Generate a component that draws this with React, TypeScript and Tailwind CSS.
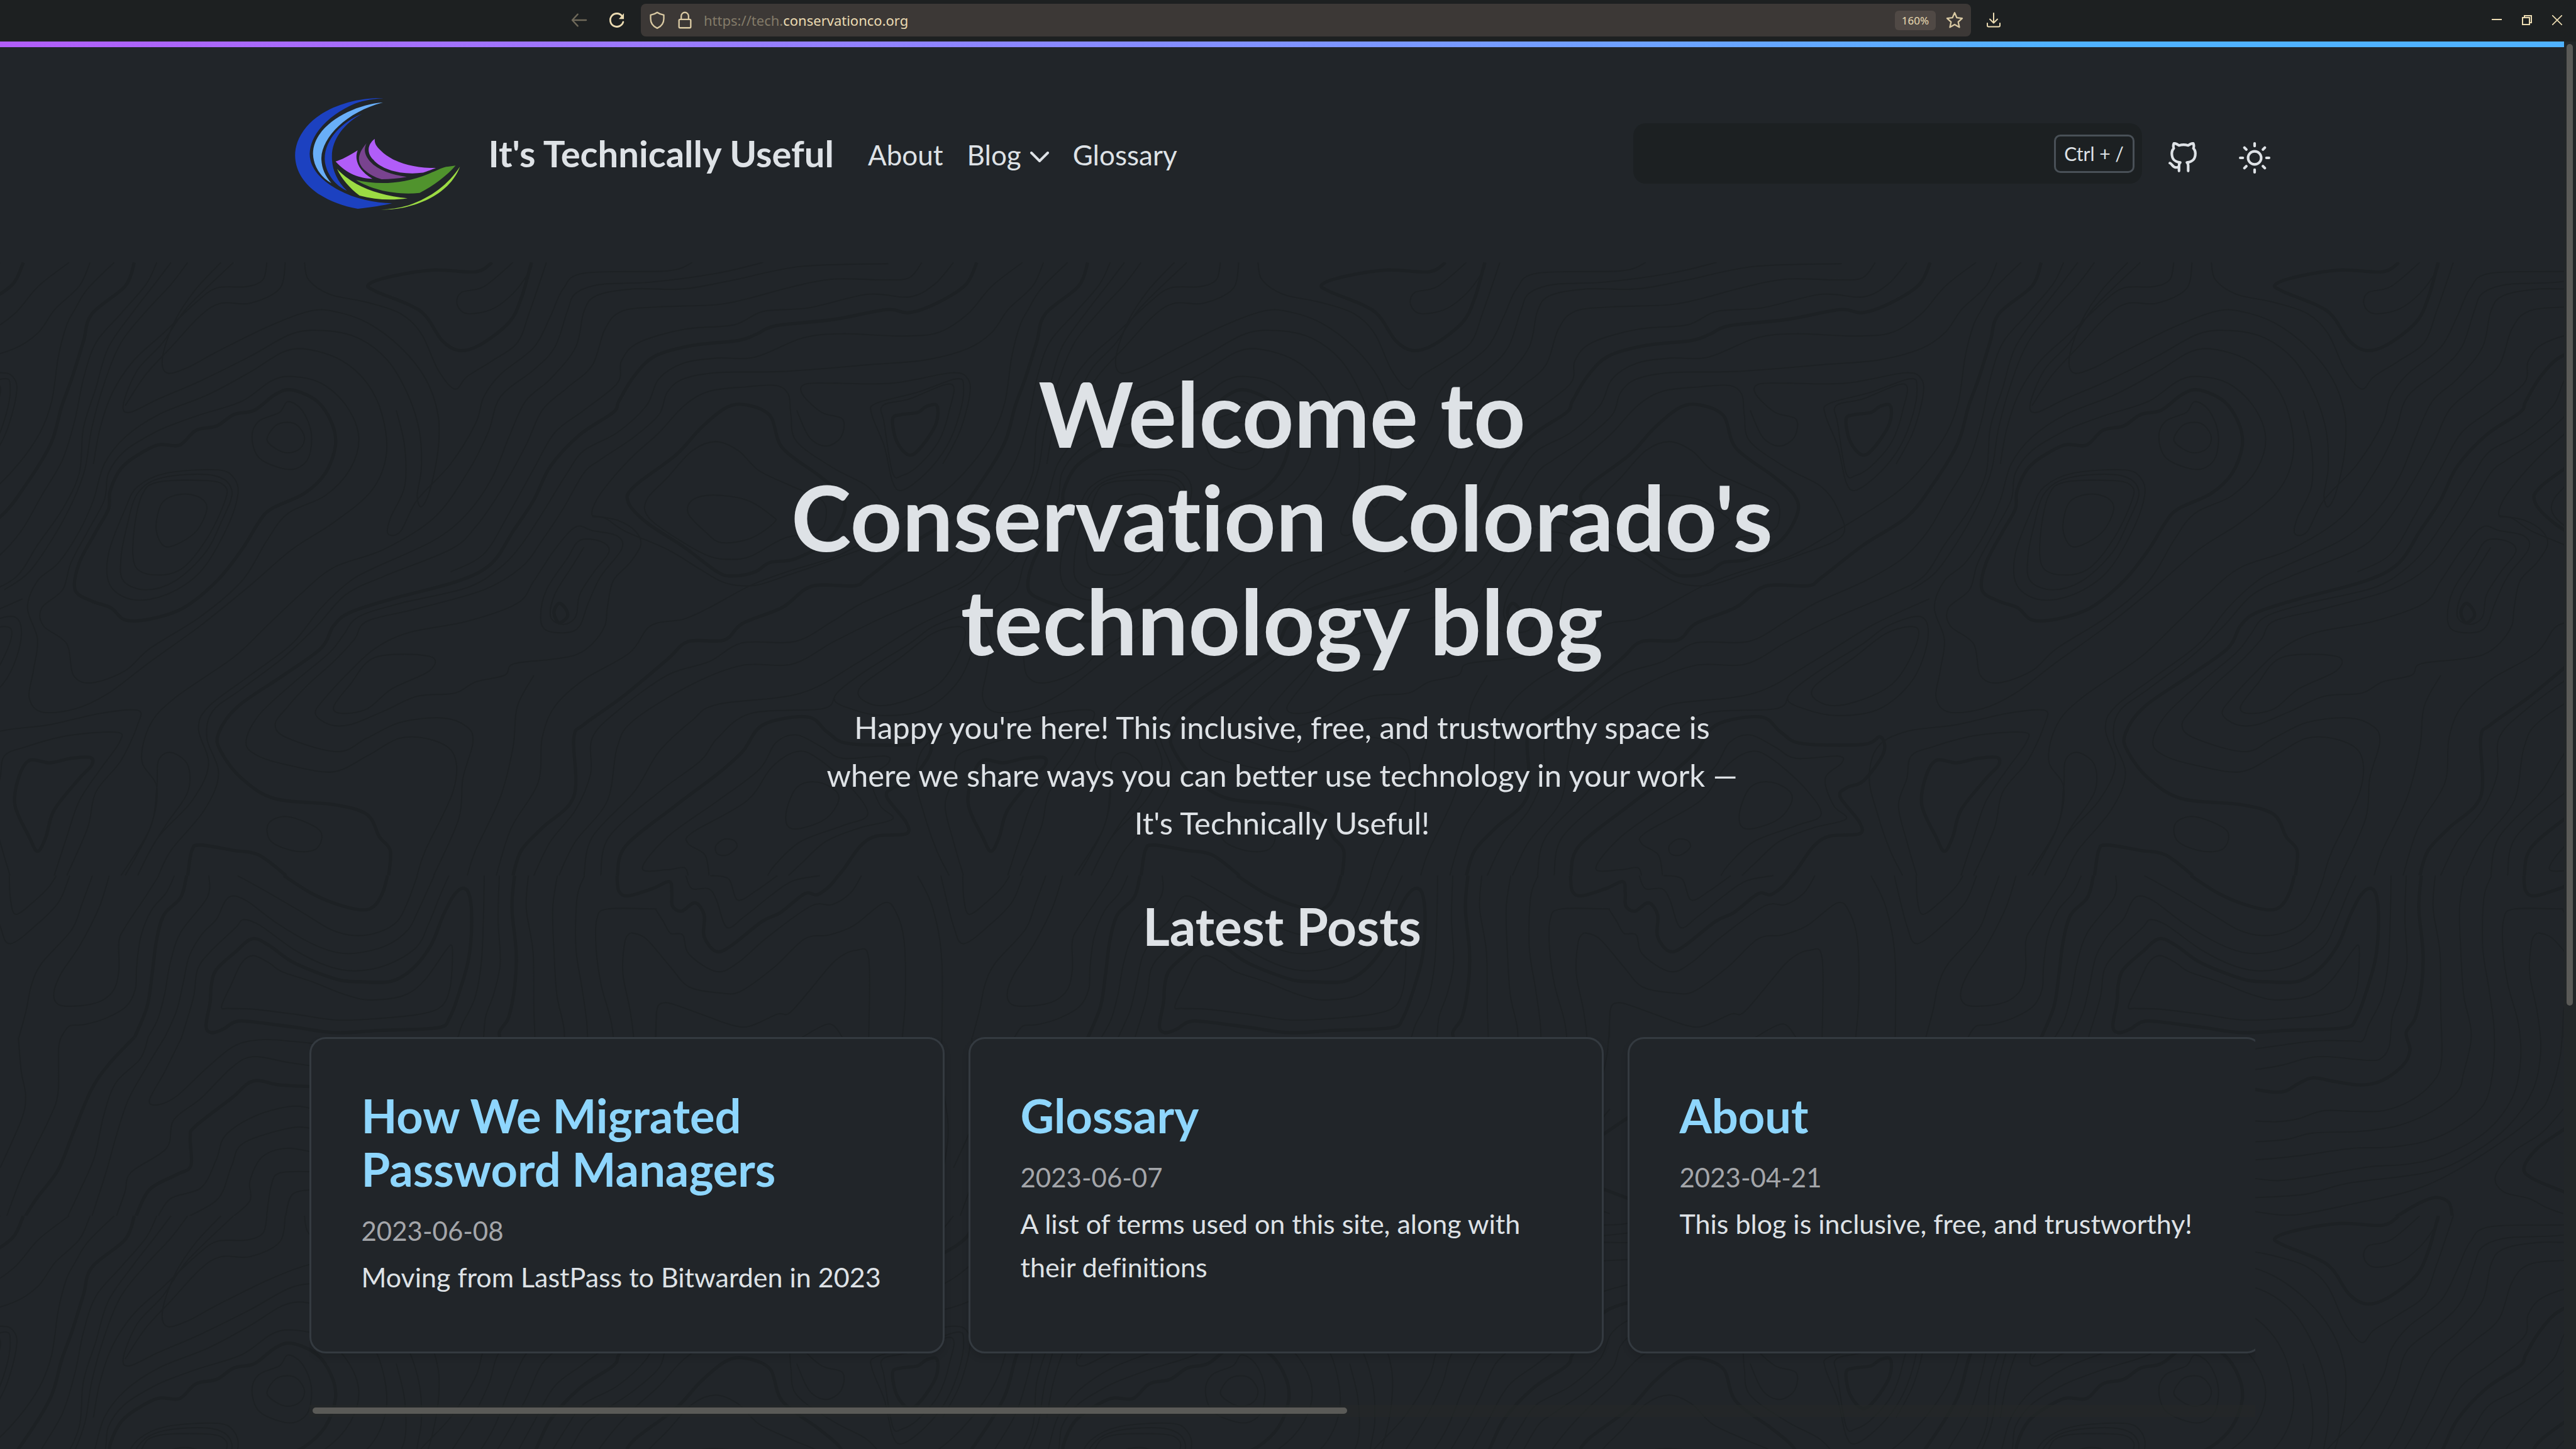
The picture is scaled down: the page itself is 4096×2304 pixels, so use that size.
import type { ReactNode } from "react";

/* ---------- Contour-line background ---------- */

const TILE = 1895;

type Frame = { sx: number; sy: number; dy: number };
const upper: Frame = { sx: 0.60308, sy: 1.12, dy: -81 };
const lower: Frame = { sx: 0.82526, sy: 2.3059, dy: 1219 };
const lowerWide: Frame = { sx: 1.19695, sy: 2.3059, dy: 1219 };

/* Catmull-Rom spline through the listed points, as an SVG path. */
function curve(frame: Frame, points: string): string {
  const p = points.split(" ").map((pair) => {
    const [x, y] = pair.split(",").map(Number);
    return [x / frame.sx, y / frame.sy + frame.dy];
  });
  const closed = p[0][0] === p[p.length - 1][0] && p[0][1] === p[p.length - 1][1];
  const n = p.length;
  let d = `M${p[0][0].toFixed(1)} ${p[0][1].toFixed(1)}`;
  for (let i = 0; i < n - 1; i++) {
    const a = i > 0 ? p[i - 1] : closed ? p[n - 2] : p[0];
    const b = p[i];
    const c = p[i + 1];
    const e = i < n - 2 ? p[i + 2] : closed ? p[1] : p[n - 1];
    const c1 = [b[0] + (c[0] - a[0]) / 6, b[1] + (c[1] - a[1]) / 6];
    const c2 = [c[0] - (e[0] - b[0]) / 6, c[1] - (e[1] - b[1]) / 6];
    d += `C${[...c1, ...c2, ...c].map((v) => v.toFixed(1)).join(" ")}`;
  }
  return d;
}

const thinUpper = [
  "83,91 46,144 17,206 -18,247 -63,255 -131,250 -180,259 -238,302 -283,304 -323,315 -353,350 -368,410 -403,470 -443,510 -463,560 -493,650 -518,720 -543,770 -583,815 -663,850 -713,880 -731,920 -748,960 -793,1030 -833,1100 -848,1160 -833,1190 -793,1212 -743,1225 -703,1190 -663,1150 -623,1155 -598,1190 -600,1270 -633,1400 -643,1456",
  "108,91 95,144 66,195 46,247 17,283 -33,308 -102,319 -205,334 -281,336 -323,350 -343,380 -353,430 -383,480 -423,530 -443,560 -468,640 -493,710 -518,770 -563,820 -643,862 -703,890 -718,930 -743,980 -773,1030 -798,1080 -813,1120 -798,1150 -738,1180 -703,1150 -663,1115 -613,1105 -583,1125 -576,1160 -588,1240 -593,1330 -623,1456",
  "137,91 105,150 90,195 80,230 70,300 62,400 48,470 22,540 -10,600 -50,650 -95,700 -140,745 -200,780 -243,810 -293,860 -323,885 -363,900 -388,960 -443,1020 -478,1080 -493,1150 -498,1250 -530,1350 -548,1456",
  "858,490 830,510 800,570 775,620 778,660 815,710 850,745 875,752 900,745 940,705 980,690 990,660 985,620 950,590 910,555 885,510 858,490",
  "855,609 830,620 825,650 845,690 865,715 900,705 928,670 925,655 895,620 855,609",
  "1065,700 1010,745 940,790 905,810 870,805 840,775 800,730 750,690 725,660 710,655 715,620 735,570 760,520 790,470 820,410 850,378 895,368 930,365 945,385 948,430 955,490 1000,550 1040,590 1060,640 1065,700",
  "710,655 740,665 762,690 768,720 755,760 735,800 728,860 725,900 710,940 690,965 660,975 615,985 605,1010 570,1025 545,1050 500,1057 460,1090 420,1120 395,1120 378,1095 390,1060 420,1000 450,950 490,915 560,890 620,850 640,800 665,730 690,680 710,688 740,700 745,730 720,790 705,850 695,900 680,915 655,910 648,880 655,820 680,750 695,710 720,712 730,735 712,780 695,830 690,880 675,897 660,880 665,830 685,770 700,725",
  "450,970 515,968 515,1000 470,1040 440,1085 410,1095 400,1080 420,1030 450,970",
  "1140,362 1090,395 1058,410 1060,450 1070,560 1082,565 1100,545 1125,490 1138,420 1140,362",
  "1147,350 1100,380 1050,405 1045,430 1060,500 1070,580 1082,598 1110,560 1135,500 1150,430 1155,370 1147,350",
  "1130,540 1150,470 1162,390 1160,350 1140,337 1070,360 1000,360 965,362 962,385 985,425 1010,440 1008,480 990,500 970,480 955,420",
  "345,447 330,455 320,485 330,505 345,515 360,505 365,480 357,455 345,447",
  "345,401 335,425 310,445 302,480 310,525 335,548 355,550 370,525 373,470 362,420 345,401",
  "350,345 325,355 290,400 240,430 210,450 185,470 150,510 130,560 125,620 105,690 85,760 75,820 50,860 52,900 80,940 88,1010 110,1027 150,1000 180,950 240,880 290,800 320,710 345,650 390,610 420,550 430,480 415,410 385,360 350,345",
  "265,91 235,150 210,220 195,300 200,337 225,325 260,290 320,235 370,200 400,200 440,225 480,280 510,350 525,430 525,510 515,600 505,635 500,610 505,550 503,470 490,390 465,310 430,260 390,243 350,250 300,300 240,355 190,395 155,425 148,405 165,330 195,270 225,190 280,91",
  "370,285 340,290 300,335 250,385 190,430 150,480 125,540 112,620 95,690 70,760 45,800 33,860 45,930 40,1000 35,1060 50,1092 90,1085 130,1050 180,980 240,900 300,810 350,730 400,670 445,600 463,520 458,430 440,360 410,310 370,285",
  "260,553 200,560 165,590 150,640 130,740 132,810 160,842 200,830 240,780 270,690 285,610 280,570 260,553",
  "255,565 195,570 165,605 152,680 145,750 148,800 175,820 210,800 245,740 265,670 278,600 255,565",
  "250,577 190,580 170,610 160,700 163,770 190,787 220,770 250,700 270,620 270,590 250,577",
  "218,607 195,625 187,680 195,720 210,720 235,690 248,640 240,615 218,607",
  "615,91 580,145 553,158 548,185 560,205 590,195 615,160 635,110 638,91",
  "365,91 370,130 395,162 440,180 480,205 505,250 525,330 545,373 560,345 590,310 620,270 635,200 655,91",
  "830,91 800,110 700,115 675,150 660,210 640,280 600,340 580,390 570,450 540,540 500,620 480,690 465,695 468,660 485,590 485,500 475,420",
  "915,91 860,115 780,135 720,140 690,160 680,200 665,280 640,330 600,390 585,470 560,560 520,660 460,730 400,770 360,830 320,900 280,970 210,1060 180,1120 170,1200 188,1260 180,1350 150,1456",
  "1065,94 960,100 880,130 820,150 760,150 715,165 700,200 690,280 660,350 630,400 610,480 590,570 560,650 520,710 450,770 420,800 385,860 350,940 300,1010 250,1080 238,1130 250,1210 230,1290 190,1370 165,1456",
  "1105,91 1090,125 1060,130 1000,128 950,145 900,170 860,185 790,190 745,200 725,240 710,320 680,370 650,420 630,500 600,600 570,680 540,730 460,790 415,830 380,900 340,970 290,1040 255,1090 248,1150 262,1230 245,1310 205,1400 190,1456",
  "1143,91 1120,140 1090,168 1040,162 970,192 915,200 880,230 820,240 765,270 745,310 740,360 700,420 665,470 640,550 610,650 580,740 540,780",
  "188,91 175,140 145,205 115,270 100,350 90,440 75,530 50,610 25,690 -5,750 -50,800 -110,850 -145,890 -190,935 -253,938 -293,980 -343,1010 -403,1090 -433,1150 -435,1230 -453,1310 -483,1380 -503,1456",
  "205,91 185,140 160,200 130,280 115,370 100,460 95,560 75,640 45,720 20,790 -20,830 -83,880 -143,935 -193,985 -253,988 -313,1030 -383,1110 -403,1170 -415,1290 -453,1380 -473,1456",
  "225,91 205,140 175,200 145,270 125,360 110,460 102,550 88,620 65,700 35,780 5,820",
  "320,91 315,130 295,145 260,148 235,180 195,250 160,310 135,380 120,460 112,540",
  "342,91 335,150 300,182 265,182 240,210 205,280 175,340 150,410",
  "1170,840 1100,900 1030,980 960,1050 860,1075 830,1110 790,1180 760,1270 710,1370 700,1456",
  "1000,1060 985,1085 900,1095 860,1150 840,1200 790,1270 730,1370 720,1456",
  "640,1010 620,1080 615,1170 600,1280 570,1400 560,1456",
  "1160,880 1120,900 1090,940 1030,1010 1000,1060 1020,1085 1060,1100 1110,1085 1150,1020 1168,930 1160,880",
  "1155,905 1120,915 1080,970 1030,1040 1045,1075 1080,1070 1125,1030 1150,960 1155,905",
  "80,1456 105,1350 115,1270 145,1200 165,1120 165,1088 120,1095 60,1120 0,1135 -35,1170 -45,1240 -35,1320 -20,1400 -5,1456",
  "65,1456 80,1370 95,1290 120,1220 143,1160 140,1137 80,1145 30,1170 5,1190 0,1240 -10,1300 0,1380 12,1456",
  "145,1456 180,1350 188,1260 190,1200 205,1182 225,1210 225,1270 200,1340 180,1400 165,1456",
  "345,1325 322,1340 325,1380 355,1402 380,1395 383,1355 345,1325",
  "825,1456 820,1438 800,1443 770,1440 800,1370 860,1290 910,1220 930,1160 955,1143 985,1170 1010,1195 1060,1190 1065,1205 1045,1240 1055,1300 1070,1330 1030,1350 990,1380 960,1430 945,1456",
  "850,1456 845,1410 825,1385 830,1360 895,1290 925,1215 955,1180 980,1195 1020,1260 1040,1320 1010,1345 960,1380 930,1430 920,1456",
  "980,1248 955,1260 942,1320 950,1352 985,1335 1003,1300 1003,1270 980,1248",
  "868,1375 858,1390 860,1408 872,1410 883,1393 880,1378 868,1375",
];

const thickUpper = [
  "28,91 15,140 -18,180 -53,203 -80,196 -143,218 -213,232 -235,250 -258,265 -313,276 -358,300 -383,345 -401,400 -408,425 -448,475 -483,545 -503,620 -528,690 -553,760 -593,800 -673,840 -723,870 -743,900 -758,950 -803,1010 -858,1080 -881,1140 -878,1180 -853,1240 -813,1285 -743,1298 -703,1320 -688,1370 -675,1400 -677,1456",
  "161,91 150,144 110,206 100,267 86,350 74,411 61,494 31,586 0,658 -52,720 -102,792 -119,811 -170,812 -205,859 -253,895 -275,932 -318,935 -343,975 -398,1060 -443,1120 -455,1150 -455,1280 -493,1350 -518,1400 -528,1456",
  "350,375 330,385 305,420 280,430 260,455 235,465 215,498 190,497 165,520 145,550 132,600 130,640 115,690 95,760 90,820 110,845 133,860 150,887 180,885 220,860 260,800 290,730 310,670 325,640 365,605 390,560 402,500 398,450 380,400 350,375",
  "894,408 870,415 840,460 810,520 760,590 753,625 775,670 820,725 860,780 879,789 905,780 923,759 953,751 992,710 1012,648 1007,607 982,566 938,504 923,432 894,408",
  "670,850 664,870 670,893 680,880 678,862 670,850",
  "1080,430 1070,440 1075,490 1090,520 1105,500 1122,450 1123,410 1110,412 1100,425 1080,430",
  "590,91 570,112 520,108 470,122 442,140 450,155 490,185 510,210 530,265 550,287 575,275 610,225 625,170 637,91",
  "343,1456 310,1410 280,1400 240,1388 230,1400 225,1456",
  "108,1193 85,1195 60,1205 35,1200 22,1240 18,1300 35,1370 45,1402 55,1370 65,1310 95,1240 110,1210 108,1193",
  "740,1456 750,1390 810,1300 860,1230 890,1180 915,1120 968,1103 992,1137 1017,1162 1091,1164 1111,1147 1115,1183 1091,1245 1071,1260 1063,1281 1086,1337 1086,1363 1051,1368 1032,1389 1012,1440 1005,1456",
];

const thinLower = [
  "30,742 35,900 42,1010 35,1120 0,1340",
  "100,742 96,800 95,1000 80,1120 40,1350 10,1568",
  "243,742 230,840 190,950 170,1100 155,1290 130,1450 110,1568",
  "270,742 240,880 210,1030 190,1200 175,1350 150,1568",
  "298,742 270,900 245,1030 260,1050 290,1010 340,880 385,780 430,752 480,760 520,772",
  "520,876 470,855 415,830 380,880 330,1020 285,1120 273,1250 215,1360 205,1450 190,1568",
  "520,1074 480,1057 420,1100 370,1190 355,1300 330,1430 280,1480 258,1568",
  "520,1164 480,1155 400,1225 380,1330 358,1480 305,1568",
  "520,1272 470,1250 430,1290 410,1400 410,1490 380,1568",
  "520,1358 460,1362 445,1420 437,1568",
  "520,1438 480,1460 468,1568",
  "1075,153 1088,210 1100,265 1120,272 1130,360 1175,440 1210,400 1260,280 1330,140 1365,133 1395,80 1413,0",
  "1076,742 1078,610 1090,583 1110,595 1150,635 1200,685 1230,690 1275,635 1295,630 1330,520 1370,390 1405,342 1425,380 1425,742",
  "1035,262 1060,290 1100,420 1130,510 1180,538 1215,530 1270,420 1320,290 1360,272 1400,230 1450,125 1470,170 1483,300 1485,560 1480,742",
  "1125,0 1135,60 1162,60 1175,110 1192,237 1220,190 1265,90 1300,25 1345,0",
  "1165,0 1195,15 1210,112 1240,70 1275,0",
  "1315,742 1360,680 1382,742",
  "1505,0 1530,150 1545,400 1545,900 1555,1200 1530,1568",
];

const thickLower = [
  "220,742 180,860 150,980 120,1180 95,1350 60,1480 40,1568",
  "520,968 460,960 415,942 380,1020 320,1150 312,1200 313,1330 290,1370 245,1440 222,1568",
  "1012,0 1015,70 1030,93 1070,60 1098,28 1102,80 1103,140 1118,163 1140,125 1155,180 1155,280 1175,348 1200,320 1250,210 1280,170 1320,83 1340,88 1360,50 1375,0",
];

const thinLowerWide = [
  "22,0 25,110 38,178 80,120 115,55 134,0",
  "-30,0 0,230 25,312 90,220 140,120 166,0",
  "220,0 195,130 170,250 100,400 75,500 62,620 45,742",
  "260,0 235,150 190,320 145,450 128,540 140,592 190,597 240,575 272,520 283,430 283,300 300,230 345,100 378,0",
  "415,0 395,80 360,160 335,280 325,420 322,520 300,600 250,655 200,683 165,690 145,742",
  "497,0 493,100 430,260 405,400 392,540 375,660 352,742",
  "392,742 420,620 435,500 450,370 480,270 515,200 535,120 555,93 590,120 660,220 740,310 800,352 850,355 920,320 970,250 995,160 1033,0",
  "432,742 460,560 470,430 500,350 560,240 580,202 620,230 700,340 780,415 845,437 920,410 990,330 1020,220 1045,100 1068,0",
  "565,0 640,80 720,170 790,250 845,275 900,260 945,210 970,120 993,0",
  "602,367 575,400 550,500 527,600 545,609 600,612 700,635 800,662 900,655 1000,635 1050,600 1070,520 1076,400 1075,322 1060,345 1010,480 960,550 880,570 820,545 740,485 670,440 640,400 602,367",
  "1152,0 1150,200 1145,400 1130,560 1100,680 1085,755 1060,758 980,757 900,775 820,797",
  "1188,0 1185,200 1190,400 1175,540 1155,650 1148,780 1130,835 1100,847 1000,830 950,838 890,870 820,892",
  "1257,0 1252,150 1268,350 1270,600 1272,850 1250,950 1200,1030 1135,1077 1060,1080 990,1078 930,1115 880,1128 820,1124",
  "1326,0 1315,150 1318,350 1325,550 1343,730 1325,900 1310,990 1250,1080 1170,1145 1080,1172 967,1180 900,1210 820,1221",
  "1391,0 1373,100 1370,330 1385,520 1397,700 1395,880 1375,1040 1320,1140 1240,1215 1150,1245 1060,1250 930,1285 820,1305",
  "1562,153 1445,153 1420,200 1418,330 1430,500 1455,680 1460,850 1440,1020 1380,1170 1280,1280 1190,1323 1100,1335 960,1380 880,1398 820,1386",
  "1500,262 1487,300 1482,450 1500,630 1508,800 1490,980 1430,1150 1340,1280 1240,1360 1050,1410 950,1460 820,1477",
  "1562,620 1555,820 1530,1000 1500,1090 1400,1240 1280,1380 1190,1450 1060,1505 960,1545 900,1557 820,1538",
  "1562,1070 1510,1180 1440,1270 1400,1380 1420,1450 1480,1480 1520,1520 1562,1550",
];

const thickLowerWide = [
  "444,0 430,100 390,180 372,300 362,450 350,600 320,742",
  "675,0 740,80 800,130 860,157 890,140 910,80 922,0",
  "600,290 560,350 515,430 503,500 500,580 490,690 503,720 530,705 560,670 600,670 700,695 800,720 900,710 1040,698 1070,650 1095,520 1115,380 1122,230 1118,100 1103,58 1080,90 1055,180 1025,320 980,430 930,485 860,487 800,475 700,400 640,320 600,290",
  "1224,0 1218,150 1228,350 1225,500 1210,650 1188,720 1197,800 1180,870 1130,940 1080,960 1020,945 967,927 935,950 900,988 870,992 820,978",
  "1620,1090 1562,1165 1500,1250 1468,1340 1490,1390 1562,1448 1620,1490",
  "1160,1568 1220,1500 1260,1475 1290,1500 1298,1568",
];

const thin = [
  ...thinUpper.map((s) => curve(upper, s)),
  ...thinLower.map((s) => curve(lower, s)),
  ...thinLowerWide.map((s) => curve(lowerWide, s)),
].join("");
const thick = [
  ...thickUpper.map((s) => curve(upper, s)),
  ...thickLower.map((s) => curve(lower, s)),
  ...thickLowerWide.map((s) => curve(lowerWide, s)),
].join("");

function Contours() {
  return (
    <svg className="absolute inset-0 h-full w-full" aria-hidden="true">
      <defs>
        <pattern id="contours" width="1516" height="1516" patternUnits="userSpaceOnUse" viewBox={`0 0 ${TILE} ${TILE}`}>
          {[-TILE, 0, TILE].map((dx) => (
            <g key={dx} transform={`translate(${dx} 0)`} fill="none" stroke="#1d2124" strokeLinejoin="round">
              <path d={thin} strokeWidth="3" />
              <path d={thick} strokeWidth="7" />
            </g>
          ))}
        </pattern>
      </defs>
      <rect width="100%" height="100%" fill="url(#contours)" />
    </svg>
  );
}

/* ---------- Icons ---------- */

function Icon({ size, width = 2, children }: { size: string; width?: number; children: ReactNode }) {
  return (
    <svg className={size} viewBox="0 0 24 24" fill="none" stroke="currentColor" strokeWidth={width} strokeLinecap="round" strokeLinejoin="round" aria-hidden="true">
      {children}
    </svg>
  );
}

function Logo() {
  return (
    <svg className="h-[181px] w-[267px] shrink-0" viewBox="80 90 1000 680" role="img" aria-label="Conservation Colorado">
      <path fill="#1c41c0" d="M610 98C450 92 250 150 150 270C100 330 83 390 83 440C85 600 240 720 458 759C540 750 610 738 662 726C560 724 440 700 340 645C230 585 170 510 170 430C175 300 300 190 440 130C500 108 560 100 610 98Z" />
      <path fill="#69aff8" d="M608 124C430 135 190 260 190 430C192 500 230 565 300 606C260 560 240 510 240 455C245 330 390 180 608 124Z" />
      <path fill="#1c41c0" d="M482 192C370 235 260 340 260 460C262 540 320 620 393 651C330 590 302 520 303 445C303 340 380 245 482 192Z" />
      <path fill="#b15df8" d="M325 476C375 460 420 432 457 409C440 450 445 520 545 579C470 577 390 550 325 476Z" />
      <path fill="#79438f" d="M510 367C455 430 450 480 495 525C525 552 560 572 600 582C650 582 700 578 750 568C660 555 580 530 530 475C495 435 493 400 510 367Z" />
      <path fill="#b15df8" d="M559 341C520 370 505 420 550 465C600 525 720 560 848 543C880 533 900 524 924 515C800 515 690 490 610 425C570 390 556 370 559 341Z" />
      <path fill="#50932d" d="M447 587C570 615 720 615 880 550C940 525 970 508 995 507L1042 500C990 560 910 620 827 664C680 678 540 645 447 587Z" />
      <path fill="#9cdb43" d="M334 520C360 580 410 635 468 680C560 705 660 710 755 696C640 685 530 655 450 610C400 580 365 555 334 520Z" />
      <path fill="#9cdb43" d="M596 763C760 770 1000 690 1068 507C1000 610 900 690 760 738C700 755 650 762 596 763Z" />
    </svg>
  );
}

/* ---------- Browser toolbar ---------- */

function Toolbar() {
  return (
    <div className="flex h-[66px] shrink-0 items-center bg-[#1d2021] pb-0.5 font-['Noto_Sans',sans-serif] text-[#ebdbb2]">
      <div className="flex w-[1019px] items-center justify-end gap-8 pr-6">
        <button aria-label="Back" className="text-[#6f695a]">
          <Icon size="size-7"><path d="M21.500 12H3M10 4l-7.500 8 7.500 8" /></Icon>
        </button>
        <button aria-label="Reload">
          <Icon size="size-7" width={2.4}>
            <path d="M20.500 14.500A9 9 0 1 1 19 6.500" />
            <path d="M21.500 2.500v8h-7z" fill="currentColor" stroke="none" />
          </Icon>
        </button>
      </div>
      <div className="flex h-[52px] flex-1 items-center rounded-lg bg-[#3c3836] pr-3">
        <span className="ml-3 text-[#d9c9a3]">
          <Icon size="size-7"><path d="M12 1.500c3 2.200 6 3 9 3.500v5c0 6-3.500 10.500-9 13-5.500-2.500-9-7-9-13V5c3-.500 6-1.300 9-3.500z" /></Icon>
        </span>
        <span className="ml-4 text-[#d9c9a3]">
          <Icon size="size-7"><rect x="4" y="11" width="16" height="11.500" rx="1.500" /><path d="M7 11V6.500a5 5 0 0 1 10 0V11" /></Icon>
        </span>
        <span className="ml-4 flex-1 text-[22px] leading-8">
          <span className="text-[#837b69]">https://tech.</span>conservationco.org
        </span>
        <button className="mr-4 h-[31px] w-[65px] rounded-md bg-[#504945] text-[17px] leading-none">160%</button>
        <button aria-label="Bookmark" className="text-[#d9c9a3]">
          <Icon size="size-7"><path d="M12 2l3 6.700 7.300.8-5.400 5 1.500 7.200L12 18l-6.400 3.700 1.500-7.200-5.400-5L9 8.700z" /></Icon>
        </button>
      </div>
      <div className="flex w-[962px] items-center pr-[22px]">
        <button aria-label="Downloads" className="ml-6">
          <Icon size="size-6"><path d="M12 1v15M6 10.500l6 6 6-6M2 17v3.500a2 2 0 0 0 2 2h16a2 2 0 0 0 2-2V17" /></Icon>
        </button>
        <button aria-label="Minimize" className="ml-auto">
          <svg className="size-4" viewBox="0 0 16 16" stroke="currentColor" strokeWidth="2"><path d="M0 7h16" /></svg>
        </button>
        <button aria-label="Restore" className="ml-8">
          <svg className="size-4" viewBox="0 0 16 16" fill="none" stroke="currentColor" strokeWidth="2"><path d="M1 4h11v11H1zM4 4V1h11v11h-3" /></svg>
        </button>
        <button aria-label="Close" className="ml-8">
          <svg className="size-4" viewBox="0 0 16 16" stroke="currentColor" strokeWidth="1.6"><path d="M0 0l16 16M16 0L0 16" /></svg>
        </button>
      </div>
    </div>
  );
}

/* ---------- Site header ---------- */

function SiteHeader() {
  return (
    <header className="flex h-[342px] shrink-0 items-center">
      <div className="mx-auto flex w-full max-w-[3142px] items-center">
        <a href="#home" className="flex items-center gap-[42px] pb-1 text-[58px] leading-[68px] font-bold">
          <Logo />
          It's Technically Useful
        </a>
        <nav className="ml-[54px] flex items-center gap-[38px] text-[44px] leading-[53px]">
          <a href="#about">About</a>
          <button className="flex items-center gap-[14px]">
            Blog
            <svg className="mt-2 h-[18px] w-[30px]" viewBox="0 0 30 18" fill="none" stroke="currentColor" strokeWidth="4" strokeLinecap="round" strokeLinejoin="round" aria-hidden="true"><path d="M2 2l13 13L28 2" /></svg>
          </button>
          <a href="#glossary">Glossary</a>
        </nav>
        <label className="mb-1 ml-auto flex h-24 w-[809px] items-center rounded-[20px] bg-[#1c2022] pr-3">
          <input type="search" aria-label="Search" className="min-w-0 flex-1 bg-transparent px-6 outline-none" />
          <kbd className="flex h-[61px] w-32 items-center justify-center rounded-[10px] border-[3px] border-[#495057] font-[Lato,sans-serif] text-[30px] leading-9">Ctrl + /</kbd>
        </label>
        <a href="#github" aria-label="GitHub" className="ml-10 pt-2.5">
          <Icon size="size-[50px]">
            <path d="M9 19c-5 1.500-5-2.500-7-3m14 6v-3.870a3.370 3.370 0 0 0-.94-2.610c3.140-.35 6.440-1.540 6.440-7A5.440 5.440 0 0 0 20 4.770 5.070 5.070 0 0 0 19.910 1S18.730.65 16 2.480a13.380 13.380 0 0 0-7 0C6.270.65 5.090 1 5.090 1A5.070 5.070 0 0 0 5 4.770a5.440 5.440 0 0 0-1.500 3.780c0 5.420 3.300 6.610 6.440 7A3.370 3.370 0 0 0 9 18.130V22" />
          </Icon>
        </a>
        <button aria-label="Toggle theme" className="ml-16 pt-2.5">
          <Icon size="size-[50px]">
            <circle cx="12" cy="12" r="5" />
            <path d="M12 1v2M12 21v2M4.220 4.220l1.420 1.420M18.360 18.360l1.420 1.420M1 12h2M21 12h2M4.220 19.780l1.420-1.420M18.360 5.640l1.420-1.420" />
          </Icon>
        </button>
      </div>
    </header>
  );
}

/* ---------- Posts ---------- */

const posts = [
  { title: "How We Migrated Password Managers", date: "2023-06-08", text: "Moving from LastPass to Bitwarden in 2023" },
  { title: "Glossary", date: "2023-06-07", text: "A list of terms used on this site, along with their definitions" },
  { title: "About", date: "2023-04-21", text: "This blog is inclusive, free, and trustworthy!" },
];

function Posts() {
  return (
    <div className="mx-auto mt-[128px] max-w-[3094px] overflow-hidden">
      <div className="flex gap-[38px] pb-[82px]">
        {posts.map((post) => (
          <article key={post.title} className="w-[1010px] shrink-0 rounded-[26px] border-[3px] border-[#343a40] bg-[#212529] px-20 pt-[79px] pb-[84px] shadow-[0_6px_12px_rgba(0,0,0,0.12)]">
            <h3 className="text-[74px] leading-[85px] font-bold text-[#8ed6fd]">
              <a href="#post">{post.title}</a>
            </h3>
            <p className="mt-[22px] text-[42px] leading-[69px] text-[#a4a6aa]">{post.date}</p>
            <p className="mt-1 text-[43px] leading-[69px]">{post.text}</p>
          </article>
        ))}
      </div>
      <div className="h-[19px] bg-[#242828]/60 py-1 pl-[5px]">
        <div className="h-[10px] w-[1645px] rounded-full bg-[#5a5a57]" />
      </div>
    </div>
  );
}

export default function App() {
  return (
    <div className="flex h-screen flex-col overflow-hidden bg-[#212529]">
      <Toolbar />
      <div className="flex min-h-0 flex-1">
        <div className="flex min-w-0 flex-1 flex-col overflow-hidden font-[Lato,sans-serif] text-[#dee2e6] [font-variant-ligatures:none]">
          <div className="h-[9px] shrink-0 bg-gradient-to-r from-[#b15df8] via-[#8a87ff] via-40% to-[#4fb2ff] to-80%" />
          <SiteHeader />
          <main className="relative flex-1">
            <Contours />
            <div className="relative pt-[157px]">
              <h1 className="mx-auto max-w-[1640px] text-center text-[144px] leading-[165px] font-bold">
                Welcome to Conservation Colorado's technology blog
              </h1>
              <p className="mx-auto mt-[49px] max-w-[1480px] text-center text-[49px] leading-[76px]">
                Happy you're here! This inclusive, free, and trustworthy space is where we share ways you can better use technology in your work — It's Technically Useful!
              </p>
              <h2 className="mt-[78px] text-center text-[82px] leading-[97px] font-bold">Latest Posts</h2>
              <Posts />
            </div>
          </main>
        </div>
        <div className="w-[19px] shrink-0 bg-[#222628] pt-1 pl-1">
          <div className="h-[1529px] w-[10px] rounded-full bg-[#5a5a57]" />
        </div>
      </div>
    </div>
  );
}
